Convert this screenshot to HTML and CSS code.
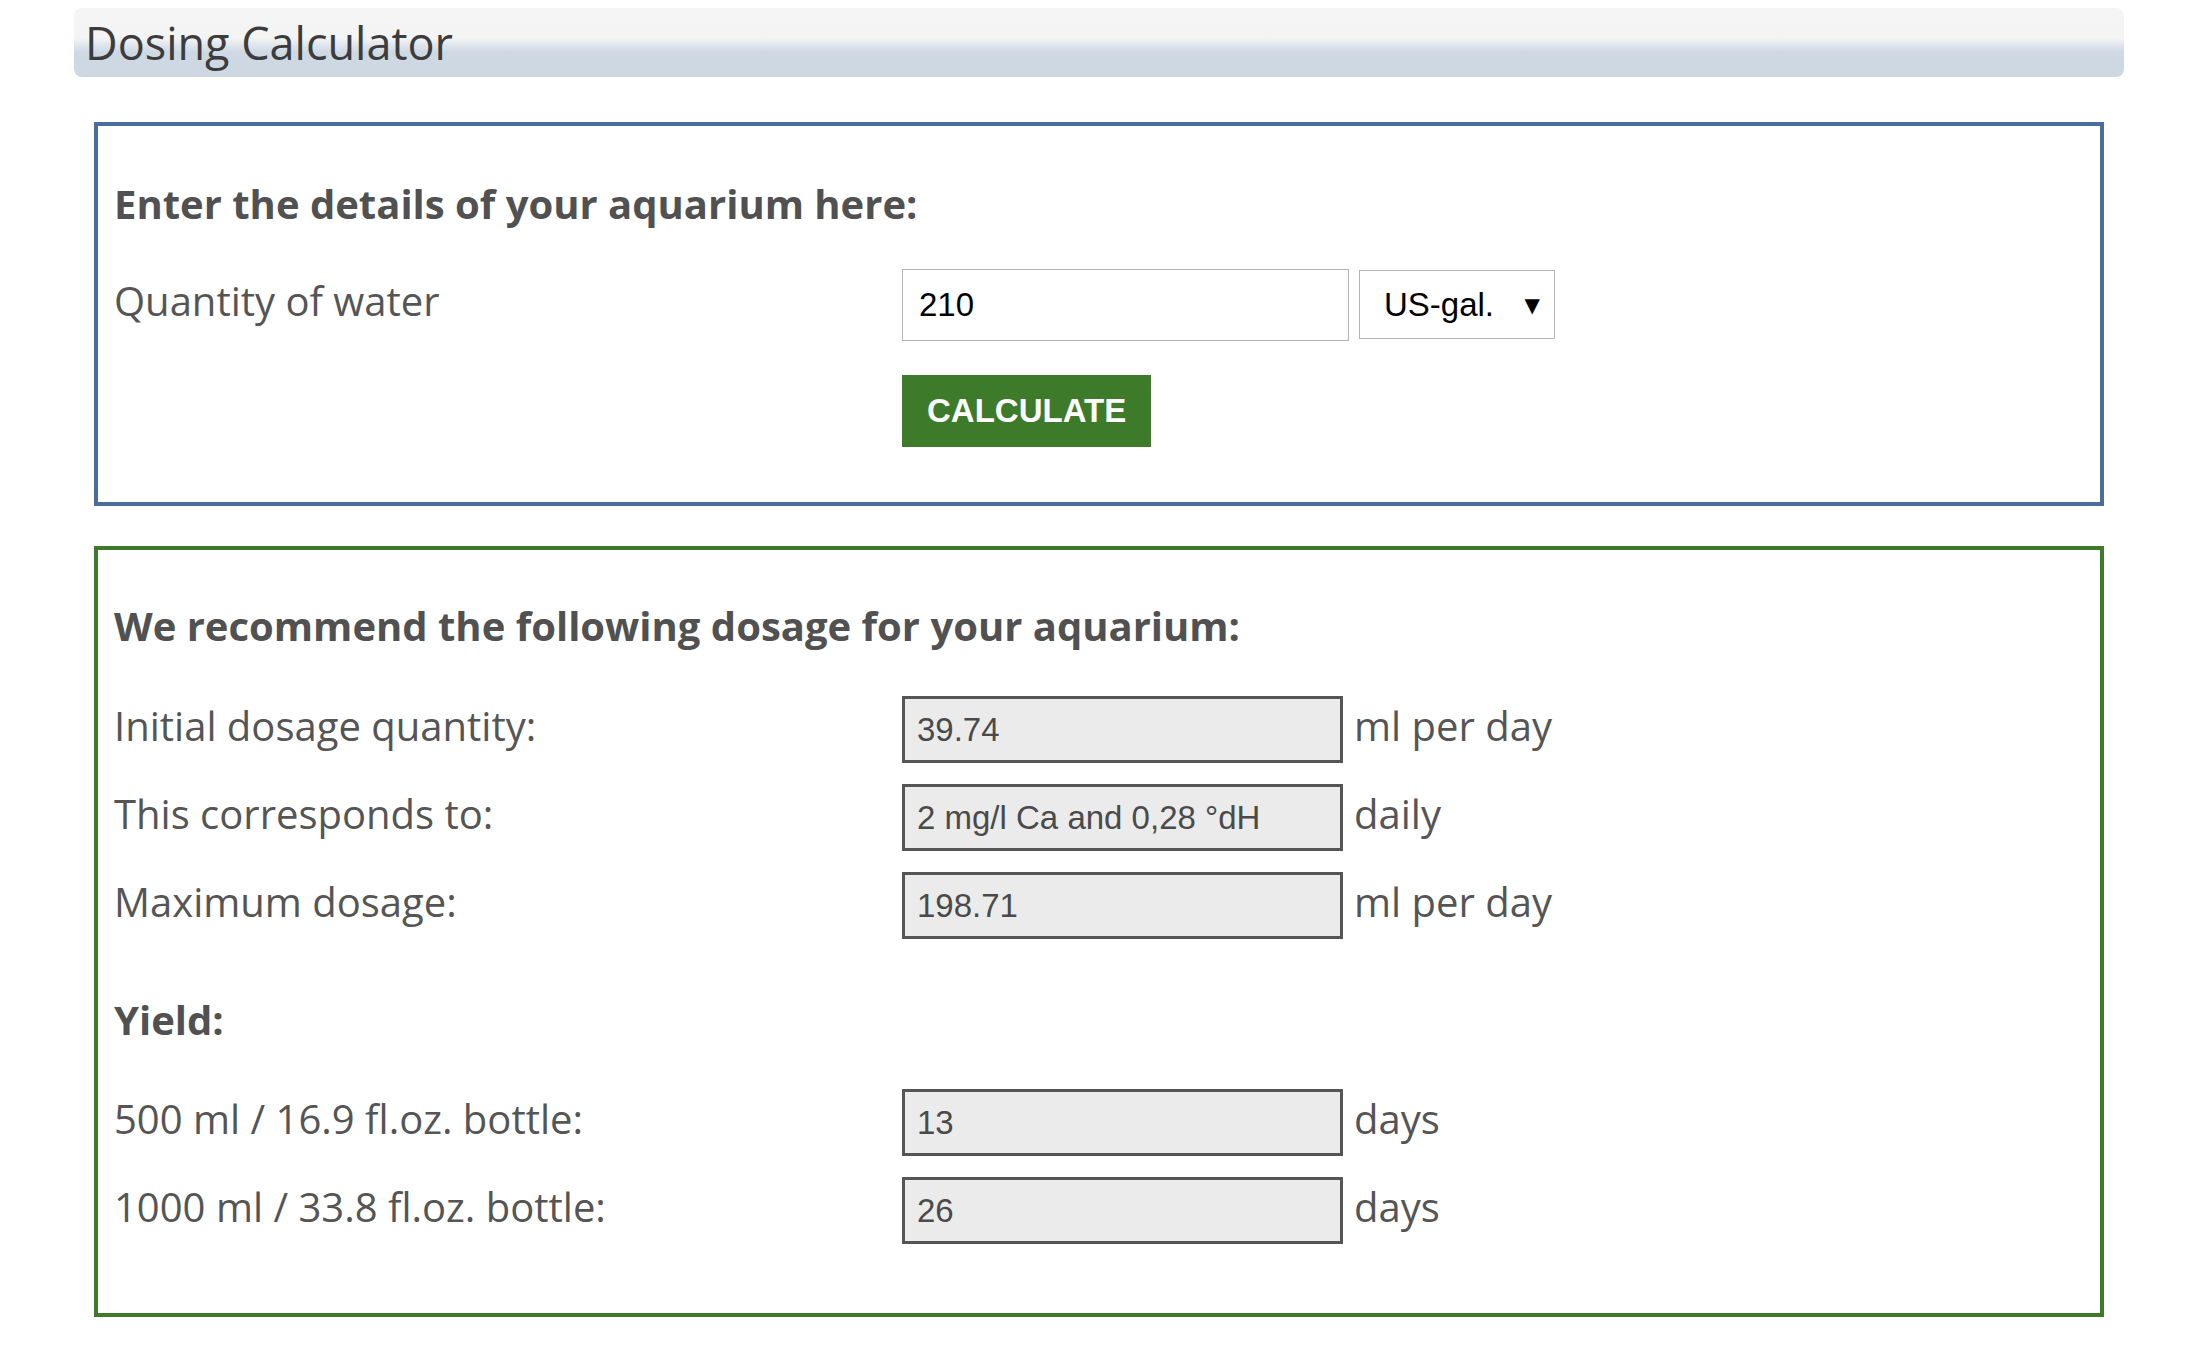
FILE: index.html
```html
<!DOCTYPE html>
<html>
<head>
    <meta charset="UTF-8">
    <title>Dosing Calculator</title>
    <link rel="stylesheet" href="styles.css">
</head>
<body>
    <div class="page">
        <h1 class="calc-title">Dosing Calculator</h1>

        <section class="calc-box calc-input">
            <h2>Enter the details of your aquarium here:</h2>
            <div class="row">
                <label for="water" class="row-label">Quantity of water</label>
                <input type="text" id="water" class="field" value="210">
                <span class="unit-select">
                    <select id="unit">
                        <option>US-gal.</option>
                        <option>Liter</option>
                        <option>UK-gal.</option>
                    </select>
                </span>
            </div>
            <div class="row btn-row">
                <button type="button" class="btn-calc">CALCULATE</button>
            </div>
        </section>

        <section class="calc-box calc-result">
            <h2>We recommend the following dosage for your aquarium:</h2>
            <div class="row out-row">
                <span class="row-label">Initial dosage quantity:</span>
                <input type="text" class="out" value="39.74" readonly>
                <span class="unit">ml per day</span>
            </div>
            <div class="row out-row">
                <span class="row-label">This corresponds to:</span>
                <input type="text" class="out" value="2 mg/l Ca and 0,28 °dH" readonly>
                <span class="unit">daily</span>
            </div>
            <div class="row out-row">
                <span class="row-label">Maximum dosage:</span>
                <input type="text" class="out" value="198.71" readonly>
                <span class="unit">ml per day</span>
            </div>

            <h2 class="sub">Yield:</h2>
            <div class="row out-row first">
                <span class="row-label">500 ml / 16.9 fl.oz. bottle:</span>
                <input type="text" class="out" value="13" readonly>
                <span class="unit">days</span>
            </div>
            <div class="row out-row">
                <span class="row-label">1000 ml / 33.8 fl.oz. bottle:</span>
                <input type="text" class="out" value="26" readonly>
                <span class="unit">days</span>
            </div>
        </section>
    </div>
</body>
</html>
```

FILE: styles.css
```css
* { box-sizing: border-box; }
body { margin: 0; padding: 8px 0 40px; background: #fff; font-family: "Open Sans", "Liberation Sans", sans-serif; color: #555; }
.page { width: 2050px; margin: 0 auto; }

/* title bar */
.calc-title { margin: 0; height: 69px; line-height: 69px; padding-left: 11px; font-size: 45px; font-weight: normal; color: #3c3c3c; border-radius: 8px;
    background: linear-gradient(to bottom, #f5f5f5 0, #f4f4f4 44%, #dfe5ec 54%, #cfd9e4 64%, #cdd7e2 100%); }

/* boxes */
.calc-box { margin: 45px 20px 0; padding: 0 16px; border: 4px solid #4a6e9c; }
.calc-input { padding-top: 51px; padding-bottom: 55px; }
.calc-result { margin-top: 40px; border-color: #3d7a29; padding-top: 49px; padding-bottom: 69px; }
.calc-box h2 { margin: 0; font-size: 40px; line-height: 54px; font-weight: bold; color: #515151; }
.calc-box h2.sub { margin-top: 54px; }

.row { display: flex; align-items: baseline; }
.row-label { width: 788px; flex: none; font-size: 40px; line-height: 54px; color: #555; }
.calc-input .row { margin-top: 38px; }
.calc-input .btn-row { margin-top: 34px; padding-left: 788px; }

/* input fields */
.field { width: 447px; height: 72px; padding: 0 16px; border: 1px solid #b4b4b4; font-family: "Liberation Sans", Arial, sans-serif; font-size: 33px; color: #000; background: #fff; }
.unit-select { position: relative; margin-left: 10px; }
.unit-select select { width: 196px; height: 69px; padding: 0 40px 0 24px; border: 1px solid #b4b4b4; border-radius: 0; background: #fff; font-family: "Liberation Sans", Arial, sans-serif; font-size: 33px; color: #000; -webkit-appearance: none; appearance: none; }
.unit-select::after { content: "\25BC"; position: absolute; right: 15px; top: 50%; transform: translateY(-50%); font-family: "DejaVu Sans", sans-serif; font-size: 20px; color: #000; pointer-events: none; }
.btn-calc { height: 72px; padding: 0 25px; border: none; border-radius: 0; background: #3d7a29; color: #fff; font-family: "Liberation Sans", Arial, sans-serif; font-size: 33px; font-weight: bold; cursor: pointer; }

/* result rows */
.out-row { margin-top: 21px; }
.calc-result h2 + .out-row { margin-top: 43px; }
.calc-result .out-row.first { margin-top: 42px; }
.out { width: 441px; height: 67px; padding: 0 12px; border: 3px solid #555; background: #ebebeb; font-family: "Liberation Sans", Arial, sans-serif; font-size: 33px; color: #4a4a4a; }
.unit { margin-left: 11px; font-size: 40px; line-height: 54px; color: #555; }
```
